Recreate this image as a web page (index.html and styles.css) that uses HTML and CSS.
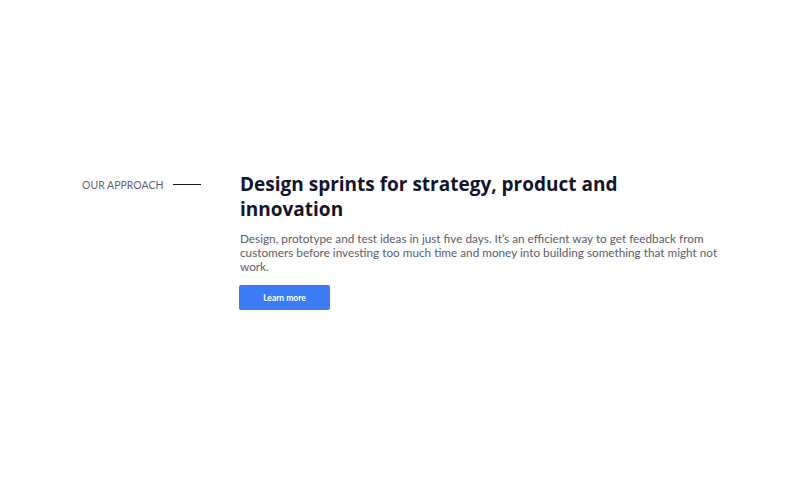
FILE: index.html
```html
<!DOCTYPE html>
<html>
<head>
<meta charset="utf-8">
<link rel="stylesheet" href="styles.css">
</head>
<body>
<section class="approach">
  <div class="side">
    <span class="label">OUR APPROACH</span>
    <span class="rule"></span>
  </div>
  <div class="main">
    <h1 class="title">Design sprints for strategy, product and innovation</h1>
    <p class="text">Design, prototype and test ideas in just five days. It’s an efficient way to get feedback from customers before investing too much time and money into building something that might not work.</p>
    <a class="btn" href="#">Learn more</a>
  </div>
</section>
</body>
</html>
```
FILE: styles.css
```css
html, body {
  margin: 0;
  padding: 0;
  background: #ffffff;
}
body {
  font-family: Lato, "Noto Sans", sans-serif;
  color: #14142b;
}
.approach {
  display: flex;
  padding: 172px 0 0 82px;
}
.side {
  width: 158px;
  display: flex;
  align-items: center;
  gap: 10px;
  height: 25px;
}
.label {
  font-size: 10.5px;
  color: #5f6370;
}
.rule {
  width: 28px;
  height: 1.5px;
  background: #1a1a2e;
}
.main {
  width: 490px;
}
.title {
  margin: 0;
  font-family: "Open Sans", Lato, sans-serif;
  font-size: 19px;
  line-height: 25px;
  font-weight: 700;
  color: #14142b;
  width: 400px;
}
.text {
  margin: 10px 0 0;
  font-size: 11.75px;
  line-height: 14px;
  color: #5a5d68;
}
.btn {
  display: flex;
  align-items: center;
  justify-content: center;
  margin: 11px 0 0 -1px;
  width: 91px;
  height: 25px;
  background: #3b7cf5;
  border-radius: 2px;
  color: #ffffff;
  font-size: 8.5px;
  font-weight: 700;
  text-decoration: none;
}
```
